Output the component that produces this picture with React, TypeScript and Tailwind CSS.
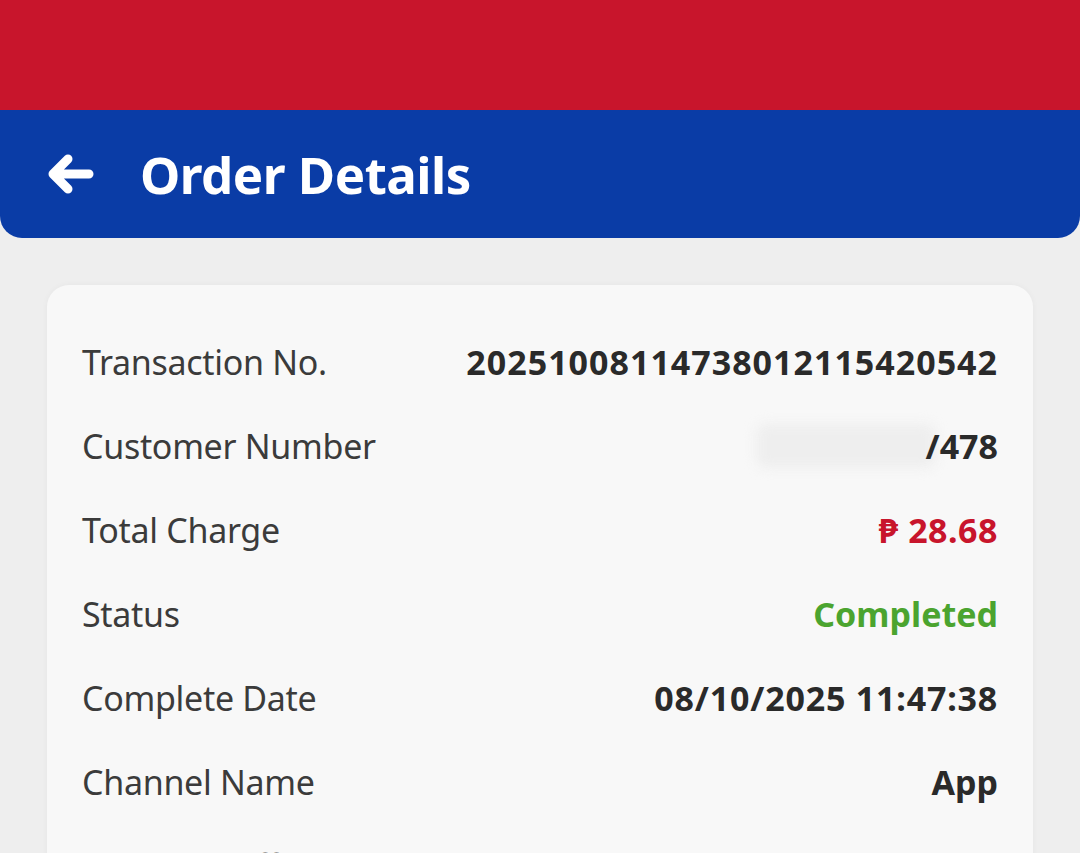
import React from "react";

function BackArrow() {
  return (
    <svg width="48" height="44" viewBox="0 0 48 44" fill="none">
      <path
        d="M43 22H8M22 7L7 22L22 37"
        stroke="white"
        strokeWidth="9"
        strokeLinecap="round"
        strokeLinejoin="round"
      />
    </svg>
  );
}

function Row({ label, children }: { label: string; children?: React.ReactNode }) {
  return (
    <div className="flex h-[84px] items-center justify-between">
      <span className="text-[34px] tracking-[-0.3px] text-[#3b3b3b]">{label}</span>
      {children}
    </div>
  );
}

const value = "text-[34px] font-bold text-[#2a2a2a]";

export default function App() {
  return (
    <div
      className="h-[853px] w-[1080px] overflow-hidden bg-[#eeeeee]"
      style={{ fontFamily: '"Noto Sans", "DejaVu Sans", sans-serif' }}
    >
      <div className="h-[110px] bg-[#c8152c]" />
      <div className="flex h-[128px] items-center rounded-b-[22px] bg-[#0a3ca6] pl-[46px]">
        <BackArrow />
        <h1 className="ml-[46px] text-[51px] font-bold tracking-[-0.5px] text-white">Order Details</h1>
      </div>

      <div className="mx-[47px] mt-[47px] rounded-[22px] bg-[#f8f8f8] px-[35px] pt-[35px] shadow-[0_0_6px_rgba(0,0,0,0.04)]">
        <Row label="Transaction No.">
          <span className={`${value} tracking-[1px]`}>20251008114738012115420542</span>
        </Row>
        <Row label="Customer Number">
          <span className={`${value} flex items-center`}>
            <span className="mr-[-10px] h-[44px] w-[180px] rounded-[10px] bg-[#eeeeee] blur-[6px]" />
            <span className="relative">/478</span>
          </span>
        </Row>
        <Row label="Total Charge">
          <span className="text-[34px] font-bold tracking-[0.5px] text-[#c8152c]">₱ 28.68</span>
        </Row>
        <Row label="Status">
          <span className="text-[34px] font-bold text-[#4ba42f]">Completed</span>
        </Row>
        <Row label="Complete Date">
          <span className={`${value} tracking-[0.8px]`}>08/10/2025 11:47:38</span>
        </Row>
        <Row label="Channel Name">
          <span className={value}>App</span>
        </Row>
        <Row label="Discount Offered" />
      </div>
    </div>
  );
}
